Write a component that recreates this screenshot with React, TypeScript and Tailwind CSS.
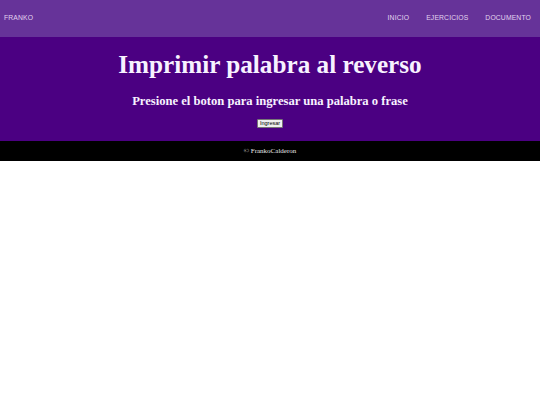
import React from "react";

export default function App() {
  return (
    <div className="w-[540px] min-h-[405px] bg-white">
      <header className="h-[37px] bg-[#663399] flex items-center justify-between pl-[4px] pr-[9px] font-['Liberation_Sans',sans-serif] text-[6.8px] tracking-[0.02em] text-[#e2d5ef]">
        <span>FRANKO</span>
        <nav className="flex gap-[17px]">
          <span>INICIO</span>
          <span>EJERCICIOS</span>
          <span>DOCUMENTO</span>
        </nav>
      </header>
      <main className="h-[104px] bg-[#4b0082] flex flex-col items-center font-['Liberation_Serif',serif] text-[#f7f2ff]">
        <h1 className="mt-[13px] text-[25.2px] leading-[30px] font-bold">Imprimir palabra al reverso</h1>
        <h3 className="mt-[14px] text-[12.6px] leading-[15px] font-bold">Presione el boton para ingresar una palabra o frase</h3>
        <button className="mt-[10px] h-[9px] px-[2px] bg-[#efefef] border border-[#767676] rounded-[1px] text-black text-[5.5px] leading-none font-['Liberation_Sans',sans-serif]">Ingresar</button>
      </main>
      <footer className="h-[20px] bg-black flex items-center justify-center font-['Liberation_Serif',serif] text-[7px] text-[#e8e8e8]">
        © FrankoCalderon
      </footer>
    </div>
  );
}
